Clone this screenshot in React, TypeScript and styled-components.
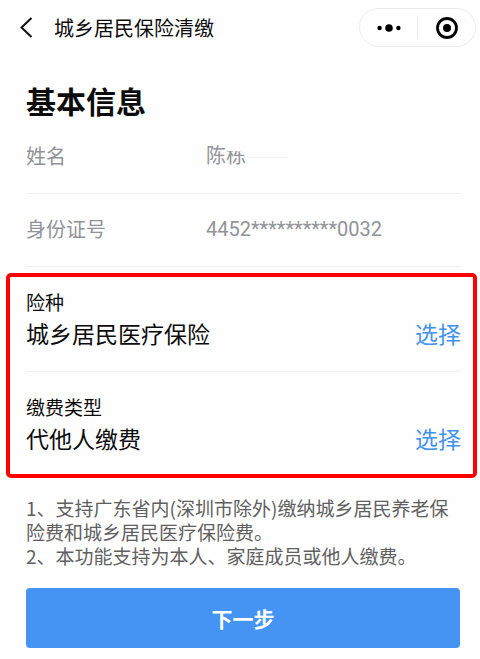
import React, { useState } from "react";
import styled, { createGlobalStyle } from "styled-components";

const GlobalStyle = createGlobalStyle`
  *, *::before, *::after { box-sizing: border-box; }
  body {
    margin: 0;
    background: #fefefe;
    color: #0c0c0c;
    font-family: "Noto Sans CJK SC", sans-serif;
  }
  button { font-family: inherit; cursor: pointer; }
`;

const Page = styled.div`
  display: flex;
  flex-direction: column;
`;

const Header = styled.header`
  display: flex;
  align-items: center;
  padding: 8px 4px 8px 16px;
`;

const BackButton = styled.button`
  display: flex;
  padding: 0;
  margin-right: 16px;
  border: 0;
  background: none;
  color: #111;
`;

const HeaderTitle = styled.h1`
  flex: 1;
  margin: 0;
  font-size: 20px;
  line-height: 28px;
  font-weight: 400;
`;

const Capsule = styled.div`
  display: flex;
  align-items: center;
  width: 117px;
  height: 39px;
  border: 1px solid #ececec;
  border-radius: 20px;
`;

const CapsuleButton = styled.button`
  flex: 1;
  display: flex;
  justify-content: center;
  padding: 0;
  border: 0;
  background: none;
  color: #000;
`;

const CapsuleDivider = styled.span`
  width: 1px;
  height: 23px;
  background: #ececec;
`;

const Main = styled.main`
  display: flex;
  flex-direction: column;
`;

const SectionTitle = styled.h2`
  margin: 24px 26px 0;
  font-size: 30px;
  line-height: 42px;
  font-weight: 700;
`;

const InfoList = styled.dl`
  margin: 0 19px 0 26px;
`;

const InfoRow = styled.div`
  display: flex;
  align-items: center;
  height: 73px;
  padding-bottom: 3px;
  border-bottom: 1px solid #f1f1f2;
`;

const InfoLabel = styled.dt`
  width: 180px;
  font-size: 20px;
  line-height: 28px;
  color: #919398;
`;

const InfoValue = styled.dd`
  display: flex;
  align-items: center;
  margin: 0;
  font-family: Roboto, "Noto Sans CJK SC", sans-serif;
  font-size: 20px;
  line-height: 28px;
  color: #919398;
`;

const MaskedCharacter = styled.span`
  position: relative;

  &::before {
    content: "";
    position: absolute;
    top: 0;
    left: 0;
    width: 24px;
    height: 9px;
    background: #fefefe;
  }
`;

const MaskTrace = styled.span`
  width: 42px;
  height: 1px;
  margin-top: 4px;
  background: #f1f1f2;
`;

const ChoicePanel = styled.section`
  margin: 6px 3px 0 6px;
  padding: 0 12px 0 16px;
  border: 4px solid #fd0000;
  border-radius: 5px;
`;

const ChoiceRow = styled.div`
  display: flex;
  align-items: flex-end;
  justify-content: space-between;
  padding: 10px 0 22px;

  & + & {
    border-top: 1px solid #f1f1f2;
    padding: 20px 0;
  }
`;

const ChoiceLabel = styled.div`
  font-size: 19px;
  line-height: 30px;
`;

const ChoiceValue = styled.div`
  font-size: 23px;
  line-height: 32px;
`;

const SelectButton = styled.button`
  padding: 0;
  border: 0;
  background: none;
  color: #4292f0;
  font-size: 23px;
  line-height: 32px;
`;

const Notes = styled.ol`
  margin: 18px 26px 0;
  padding: 0;
  list-style: none;
  font-size: 19px;
  line-height: 24px;
  color: #606060;
`;

const NextButton = styled.button`
  margin: 20px 20px 10px 26px;
  height: 60px;
  border: 0;
  border-radius: 4px;
  background: #4594f3;
  color: #fff;
  font-size: 21px;
  font-weight: 700;
`;

const choices = [
  { label: "险种", value: "城乡居民医疗保险" },
  { label: "缴费类型", value: "代他人缴费" },
];

const notes = [
  "1、支持广东省内(深圳市除外)缴纳城乡居民养老保险费和城乡居民医疗保险费。",
  "2、本功能支持为本人、家庭成员或他人缴费。",
];

export default function App() {
  const [active, setActive] = useState<string | null>(null);

  return (
    <Page>
      <GlobalStyle />
      <Header>
        <BackButton type="button" aria-label="返回">
          <svg width="22" height="24" viewBox="0 0 22 24" fill="none" stroke="currentColor" strokeWidth="2">
            <path d="M15.500 2 5.500 11.500l10 9.500" />
          </svg>
        </BackButton>
        <HeaderTitle>城乡居民保险清缴</HeaderTitle>
        <Capsule>
          <CapsuleButton type="button" aria-label="更多">
            <svg width="24" height="24" viewBox="0 0 24 24" fill="currentColor">
              <circle cx="2.600" cy="12" r="2.200" />
              <circle cx="12" cy="12" r="3.800" />
              <circle cx="21.400" cy="12" r="2.200" />
            </svg>
          </CapsuleButton>
          <CapsuleDivider />
          <CapsuleButton type="button" aria-label="关闭">
            <svg width="24" height="24" viewBox="0 0 24 24">
              <circle cx="12" cy="12" r="9.500" fill="none" stroke="currentColor" strokeWidth="2.800" />
              <circle cx="12" cy="12" r="4" fill="currentColor" />
            </svg>
          </CapsuleButton>
        </Capsule>
      </Header>
      <Main>
        <SectionTitle>基本信息</SectionTitle>
        <InfoList>
          <InfoRow>
            <InfoLabel>姓名</InfoLabel>
            <InfoValue>
              陈<MaskedCharacter>栋</MaskedCharacter>
              <MaskTrace />
            </InfoValue>
          </InfoRow>
          <InfoRow>
            <InfoLabel>身份证号</InfoLabel>
            <InfoValue>4452**********0032</InfoValue>
          </InfoRow>
        </InfoList>
        <ChoicePanel>
          {choices.map(({ label, value }) => (
            <ChoiceRow key={label}>
              <div>
                <ChoiceLabel>{label}</ChoiceLabel>
                <ChoiceValue>{value}</ChoiceValue>
              </div>
              <SelectButton
                type="button"
                aria-label={`选择${label}`}
                aria-pressed={active === label}
                onClick={() => setActive(label)}
              >
                选择
              </SelectButton>
            </ChoiceRow>
          ))}
        </ChoicePanel>
        <Notes>
          {notes.map((note) => (
            <li key={note}>{note}</li>
          ))}
        </Notes>
        <NextButton type="button">下一步</NextButton>
      </Main>
    </Page>
  );
}
